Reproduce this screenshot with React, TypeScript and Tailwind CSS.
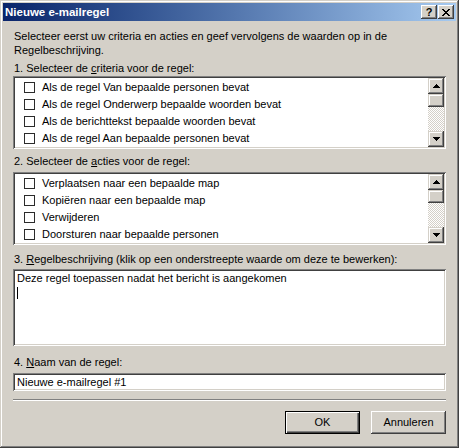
const sunken =
  "shadow-[inset_1px_1px_#808080,inset_-1px_-1px_#ffffff,inset_2px_2px_#404040,inset_-2px_-2px_#d4d0c8]";
const raised =
  "shadow-[inset_-1px_-1px_#404040,inset_1px_1px_#d4d0c8,inset_-2px_-2px_#808080,inset_2px_2px_#ffffff]";
const buttonRaised =
  "shadow-[inset_-1px_-1px_#404040,inset_1px_1px_#ffffff,inset_-2px_-2px_#808080,inset_2px_2px_#d4d0c8]";
const defaultButtonInner = "shadow-[inset_1px_1px_#ffffff,inset_-1px_-1px_#404040,inset_-2px_-2px_#808080]";

const criteria = [
  "Als de regel Van bepaalde personen bevat",
  "Als de regel Onderwerp bepaalde woorden bevat",
  "Als de berichttekst bepaalde woorden bevat",
  "Als de regel Aan bepaalde personen bevat",
];

const actions = [
  "Verplaatsen naar een bepaalde map",
  "Kopiëren naar een bepaalde map",
  "Verwijderen",
  "Doorsturen naar bepaalde personen",
];

function Arrow({ up }: { up?: boolean }) {
  return (
    <svg width="7" height="4" viewBox="0 0 7 4" className="block">
      {up ? <path d="M3 0h1v1h1v1h1v1h1v1H0V3h1V2h1V1h1z" fill="#000" /> : <path d="M0 0h7v1H6v1H5v1H4v1H3V3H2V2H1V1H0z" fill="#000" />}
    </svg>
  );
}

function ScrollBar() {
  return (
    <div className="w-[16px] h-full flex flex-col bg-[repeating-conic-gradient(#ffffff_0_25%,#d4d0c8_0_50%)] bg-[length:2px_2px]">
      <div className={`h-[16px] bg-[#d4d0c8] flex items-center justify-center ${raised}`}>
        <Arrow up />
      </div>
      <div className={`h-[13px] bg-[#d4d0c8] ${raised}`} />
      <div className="flex-1" />
      <div className={`h-[16px] bg-[#d4d0c8] flex items-center justify-center ${raised}`}>
        <Arrow />
      </div>
    </div>
  );
}

function CheckList({ items, height }: { items: string[]; height: string }) {
  return (
    <div className={`${height} bg-white p-[2px] flex ${sunken}`}>
      <div className="flex-1 pt-[1px]">
        {items.map((item) => (
          <div key={item} className="h-[17px] flex items-center">
            <span className="ml-[9px] w-[11px] h-[11px] border border-[#2b2b2b] bg-white" />
            <span className="ml-[7px] leading-[13px]">{item}</span>
          </div>
        ))}
      </div>
      <ScrollBar />
    </div>
  );
}

function Label({ children }: { children: React.ReactNode }) {
  return <div className="h-[13px] leading-[13px] pl-[1px] whitespace-nowrap">{children}</div>;
}

export default function App() {
  return (
    <div
      className={`w-[459px] h-[448px] bg-[#d4d0c8] p-[3px] flex flex-col text-[11px] text-black ${raised}`}
      style={{ fontFamily: '"Liberation Sans", Arial, sans-serif' }}
    >
      {/* Title bar */}
      <div className="h-[18px] bg-linear-to-r from-[#0a246a] to-[#a6caf0] flex items-center pl-[2px] pr-[2px]">
        <span className="text-white font-bold text-[11.5px] leading-[13px] flex-1">Nieuwe e-mailregel</span>
        <div className={`w-[16px] h-[14px] bg-[#d4d0c8] flex items-center justify-center font-bold text-[11px] leading-none ${buttonRaised}`}>
          ?
        </div>
        <div className={`ml-[1px] w-[16px] h-[14px] bg-[#d4d0c8] flex items-center justify-center ${buttonRaised}`}>
          <svg width="8" height="7" viewBox="0 0 8 7" className="block">
            <path d="M0 0h2v1h1v1h2V1h1V0h2v1H7v1H6v1H5v1h1v1h1v1h1v1H6V6H5V5H3v1H2v1H0V6h1V5h1V4h1V3H2V2H1V1H0z" fill="#000" />
          </svg>
        </div>
      </div>

      {/* Body */}
      <div className="flex flex-col px-[10px]">
        <p className="mt-[8px] leading-[14px] pl-[1px]">
          Selecteer eerst uw criteria en acties en geef vervolgens de waarden op in de
          <br />
          Regelbeschrijving.
        </p>

        <div className="mt-[5px]">
          <Label>
            1. Selecteer de <u>c</u>riteria voor de regel:
          </Label>
        </div>
        <div className="mt-[1px]">
          <CheckList items={criteria} height="h-[73px]" />
        </div>

        <div className="mt-[6px]">
          <Label>
            2. Selecteer de <u>a</u>cties voor de regel:
          </Label>
        </div>
        <div className="mt-[4px]">
          <CheckList items={actions} height="h-[73px]" />
        </div>

        <div className="mt-[8px]">
          <Label>
            3. <u>R</u>egelbeschrijving (klik op een onderstreepte waarde om deze te bewerken):
          </Label>
        </div>
        <div className={`mt-[3px] h-[77px] bg-white p-[2px] ${sunken}`}>
          <div className="pl-[2px] pt-[1px] leading-[13px]">Deze regel toepassen nadat het bericht is aangekomen</div>
          <div className="ml-[2px] mt-[2px] w-[1px] h-[12px] bg-black" />
        </div>

        <div className="mt-[10px]">
          <Label>
            4. <u>N</u>aam van de regel:
          </Label>
        </div>
        <div className={`mt-[4px] h-[18px] bg-white p-[2px] flex items-center ${sunken}`}>
          <span className="pl-[2px] leading-[13px]">Nieuwe e-mailregel #1</span>
        </div>

        <div className="mt-[8px] h-[2px] border-t border-t-[#808080] border-b border-b-white" />

        <div className="mt-[10px] flex justify-end gap-[11px]">
          <div className="w-[75px] h-[23px] border border-black">
            <div className={`w-full h-full bg-[#d4d0c8] flex items-center justify-center ${defaultButtonInner}`}>
              OK
            </div>
          </div>
          <div className={`w-[75px] h-[23px] bg-[#d4d0c8] flex items-center justify-center ${buttonRaised}`}>
            Annuleren
          </div>
        </div>
      </div>
    </div>
  );
}
